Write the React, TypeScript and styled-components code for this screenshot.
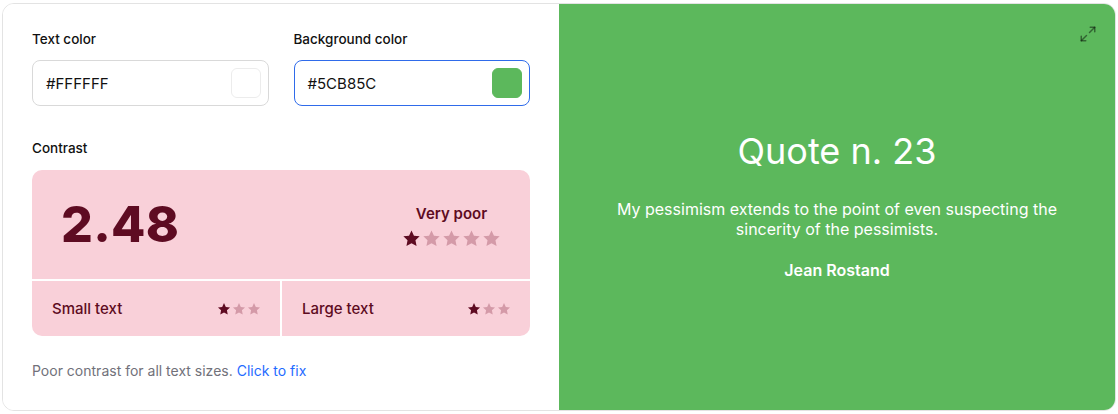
import React from 'react';
import styled, { createGlobalStyle } from 'styled-components';
import { Maximize2 } from 'lucide-react';

const GlobalStyle = createGlobalStyle`
  html, body {
    margin: 0;
    padding: 0;
    background: #ffffff;
    font-family: Inter, "Noto Sans", sans-serif;
  }
  * {
    box-sizing: border-box;
  }
`;

const MAROON = '#5e0b22';
const PINK = '#f9d0d9';
const STAR_OFF = '#d49aa8';

const Page = styled.div`
  padding: 3px 2px 4px 2px;
`;

const Card = styled.div`
  display: grid;
  grid-template-columns: 556px 1fr;
  height: 408px;
  border: 1px solid #e3e3e3;
  border-radius: 12px;
  overflow: hidden;
`;

const Controls = styled.div`
  display: flex;
  flex-direction: column;
  padding: 27px 29px 0 29px;
  background: #ffffff;
`;

const Pickers = styled.div`
  display: grid;
  grid-template-columns: 1fr 1fr;
  column-gap: 25px;
`;

const Field = styled.div`
  display: flex;
  flex-direction: column;
`;

const Label = styled.div`
  font-size: 13.5px;
  font-weight: 500;
  line-height: 17px;
  color: #111111;
`;

const ColorInput = styled.div<{ $focused?: boolean }>`
  display: flex;
  align-items: center;
  justify-content: space-between;
  height: 46px;
  margin-top: 12px;
  padding: 0 7px 0 13px;
  border: 1px solid ${(p) => (p.$focused ? '#2f6bea' : '#d9d9d9')};
  border-radius: 8px;
  font-size: 15px;
  color: #111111;
`;

const Swatch = styled.div<{ $color: string }>`
  width: 30px;
  height: 30px;
  border-radius: 6px;
  background: ${(p) => p.$color};
  border: 1px solid ${(p) => (p.$color === '#FFFFFF' ? '#ececec' : p.$color)};
`;

const ContrastLabel = styled(Label)`
  margin-top: 34px;
`;

const Score = styled.div`
  display: grid;
  grid-template-columns: 1fr 1fr;
  grid-template-rows: 109px 55px;
  gap: 2px;
  margin-top: 13px;
  background: #ffffff;
  border-radius: 10px;
  overflow: hidden;
  color: ${MAROON};
`;

const Ratio = styled.div`
  grid-column: 1 / 3;
  display: flex;
  align-items: center;
  justify-content: space-between;
  padding: 0 29px 0 29px;
  background: ${PINK};
`;

const RatioValue = styled.div`
  font-size: 50px;
  font-weight: 800;
  letter-spacing: 0.3px;
  line-height: 1;
  margin-top: -2px;
`;

const Rating = styled.div`
  display: flex;
  flex-direction: column;
  align-items: center;
  gap: 6px;
  margin-top: 3px;
`;

const RatingText = styled.div`
  font-size: 15px;
  font-weight: 600;
`;

const Stars = styled.div<{ $gap: number }>`
  display: flex;
  gap: ${(p) => p.$gap}px;
`;

const SizeCell = styled.div`
  display: flex;
  align-items: center;
  justify-content: space-between;
  padding: 0 19px 0 20px;
  background: ${PINK};
  font-size: 15px;
  font-weight: 500;
`;

const Hint = styled.div`
  margin-top: 26px;
  font-size: 14px;
  line-height: 17px;
  color: #71717a;
`;

const FixLink = styled.a`
  color: #1f6bff;
  text-decoration: none;
  cursor: pointer;
`;

const Preview = styled.div`
  position: relative;
  display: flex;
  flex-direction: column;
  align-items: center;
  justify-content: center;
  padding: 0 50px 6px;
  background: #5cb85c;
  color: #ffffff;
  text-align: center;
`;

const ExpandButton = styled.div`
  position: absolute;
  top: 21px;
  right: 18px;
  color: rgba(0, 0, 0, 0.45);
  display: flex;
`;

const QuoteTitle = styled.h2`
  margin: 0;
  font-size: 36px;
  font-weight: 400;
  line-height: 44px;
`;

const QuoteText = styled.p`
  margin: 26px 0 0;
  font-size: 16px;
  line-height: 20px;
  max-width: 450px;
`;

const Author = styled.div`
  margin-top: 21px;
  font-size: 16px;
  font-weight: 600;
`;

const Star: React.FC<{ size: number; on: boolean }> = ({ size, on }) => (
  <svg width={size} height={size} viewBox="0 0 24 24">
    <path
      d="M12 1.8l3.1 6.6 7.2.9-5.3 5 1.4 7.1L12 17.9l-6.4 3.5 1.4-7.1-5.3-5 7.2-.9z"
      fill={on ? MAROON : STAR_OFF}
    />
  </svg>
);

const StarRow: React.FC<{ count: number; filled: number; size: number; gap: number }> = ({
  count,
  filled,
  size,
  gap,
}) => (
  <Stars $gap={gap}>
    {Array.from({ length: count }).map((_, i) => (
      <Star key={i} size={size} on={i < filled} />
    ))}
  </Stars>
);

const App: React.FC = () => {
  return (
    <Page>
      <GlobalStyle />
      <Card>
        <Controls>
          <Pickers>
            <Field>
              <Label>Text color</Label>
              <ColorInput>
                #FFFFFF
                <Swatch $color="#FFFFFF" />
              </ColorInput>
            </Field>
            <Field>
              <Label>Background color</Label>
              <ColorInput $focused>
                #5CB85C
                <Swatch $color="#5CB85C" />
              </ColorInput>
            </Field>
          </Pickers>

          <ContrastLabel>Contrast</ContrastLabel>
          <Score>
            <Ratio>
              <RatioValue>2.48</RatioValue>
              <Rating>
                <RatingText>Very poor</RatingText>
                <StarRow count={5} filled={1} size={19} gap={1} />
              </Rating>
            </Ratio>
            <SizeCell>
              Small text
              <StarRow count={3} filled={1} size={14} gap={1} />
            </SizeCell>
            <SizeCell>
              Large text
              <StarRow count={3} filled={1} size={14} gap={1} />
            </SizeCell>
          </Score>

          <Hint>
            Poor contrast for all text sizes. <FixLink>Click to fix</FixLink>
          </Hint>
        </Controls>

        <Preview>
          <ExpandButton>
            <Maximize2 size={18} strokeWidth={2} />
          </ExpandButton>
          <QuoteTitle>Quote n. 23</QuoteTitle>
          <QuoteText>
            My pessimism extends to the point of even suspecting the sincerity of the pessimists.
          </QuoteText>
          <Author>Jean Rostand</Author>
        </Preview>
      </Card>
    </Page>
  );
};

export default App;
